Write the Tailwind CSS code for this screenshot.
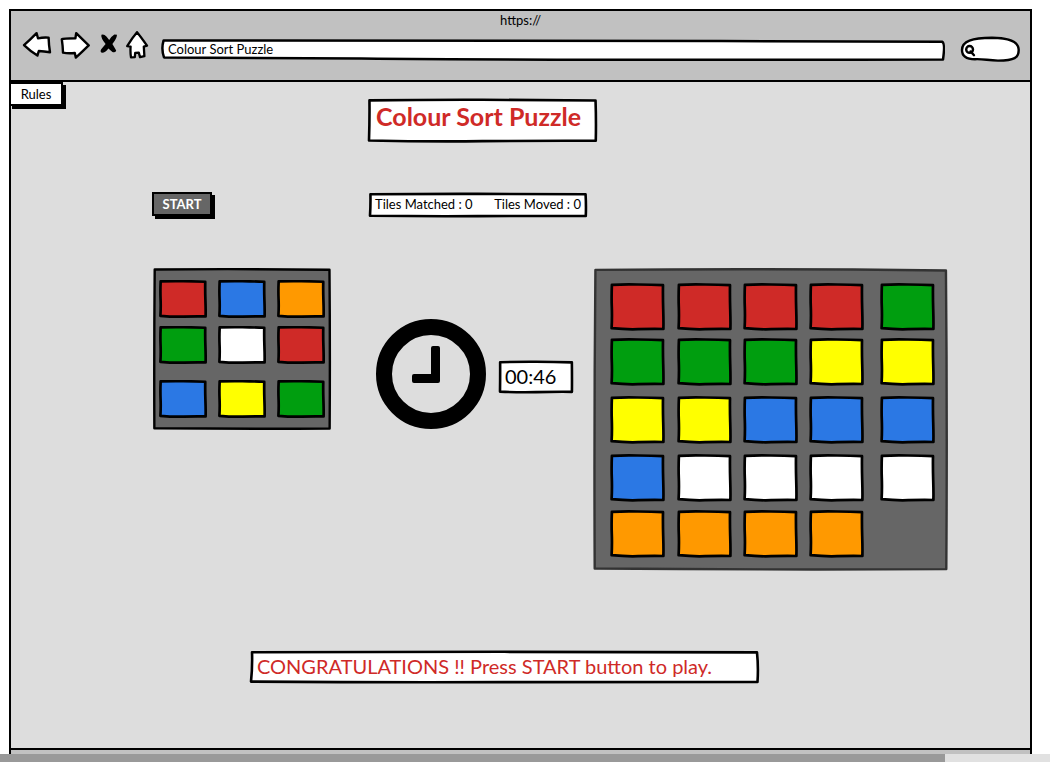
<!DOCTYPE html>
<html lang="en">
<head>
<meta charset="utf-8">
<meta name="viewport" content="width=device-width, initial-scale=1">
<title>Colour Sort Puzzle</title>
<script src="https://cdn.jsdelivr.net/npm/@tailwindcss/browser@4"></script>
</head>
<body class="bg-white font-['Lato','Liberation_Sans',sans-serif] text-[14px] leading-5 text-black">

<!-- Shared hand-drawn outlines -->
<svg class="hidden" aria-hidden="true">
  <symbol id="tile" viewBox="0 0 55 48" preserveAspectRatio="none">
    <path d="M1.9 1.8 Q14 1.2 28 1.5 T53 2.2 Q52.8 14 53.2 26 T53.4 46 Q40 45.8 28 46.2 T1.6 45.2 Q2.2 34 1.8 24 T1.9 1.8Z" fill="currentColor" stroke="#000" stroke-width="2.7" stroke-linejoin="round" vector-effect="non-scaling-stroke"/>
  </symbol>
  <symbol id="box" viewBox="0 0 100 100" preserveAspectRatio="none" overflow="visible">
    <path d="M0.2 1 Q25 -1 50 -0.6 T99.8 1.2 Q100.1 50 99.9 99.5 Q75 99 50 100.4 T0 98.6 Q0.3 50 0.2 1Z" fill="currentColor" stroke-width="2.6" stroke-linejoin="round" vector-effect="non-scaling-stroke"/>
  </symbol>
  <symbol id="panel" viewBox="0 0 100 100" preserveAspectRatio="none" overflow="visible">
    <path d="M0.4 0.3 Q50 -0.2 99.7 0.5 Q100.1 50 99.8 99.7 Q50 100 0.2 99.5 Q0 50 0.4 0.3Z" fill="currentColor" stroke-width="2.4" stroke-linejoin="round" vector-effect="non-scaling-stroke"/>
  </symbol>
</svg>

<div class="flex min-h-screen flex-col">
  <div class="mt-[9px] mr-[18px] ml-[9px] flex grow flex-col border-x-2 border-t-2 border-black bg-[#c1c1c1]">

    <header class="border-b-2 border-black pb-[18px]">
      <p class="pt-[1px] text-center text-[13px] leading-4">https://</p>
      <div class="flex items-center pr-[10px] pl-[11px]">
        <nav class="flex items-start" aria-label="Browser">
          <button class="mr-[8px]" aria-label="Back">
            <svg class="h-7 w-[30px]" viewBox="23 31 30 28" fill="#fff" stroke="#000" stroke-width="2.4" stroke-linejoin="round"><path d="M25 45.2Q31 40 37.6 33.2L39 38.3Q44 37.2 49.6 37.6Q49.8 45 51 52.2Q45 51.2 39.8 51L38.4 55.6Q31 51 25 45.2Z"/></svg>
          </button>
          <button class="mr-[8px]" aria-label="Forward">
            <svg class="h-7 w-[30px]" viewBox="60 31 30 28" fill="#fff" stroke="#000" stroke-width="2.4" stroke-linejoin="round"><path d="M61.8 39.2Q63 38.4 75.4 38.2L76.2 33.2Q82 39 88.7 45.4Q82 52 75.8 57.6L74.8 53Q68 53.8 63 52.6Q62.8 46 61.8 39.2Z"/></svg>
          </button>
          <button class="mr-[7px]" aria-label="Stop">
            <svg class="h-7 w-5" viewBox="99 31 20 28" fill="#000"><path d="M102.4 34.8Q105 33.8 107.4 36.4L110.2 40Q112.6 36 115.4 34.4L118 34.8Q117.8 38.6 113.4 44L117.2 50.4Q116.4 53 113.4 52L109.4 48.4Q106 52.8 103.4 52.8Q100.6 52.2 102.2 49.2L106.6 44Q101.6 38 102.4 34.8Z"/></svg>
          </button>
          <button class="mr-[12px]" aria-label="Home">
            <svg class="h-7 w-6" viewBox="126 31 24 28" fill="#fff" stroke="#000" stroke-width="2.3" stroke-linejoin="round"><path d="M138 32.2Q142 37 148 45.6L144.8 46.6L145.4 56.2L141 57.2L139.8 52.6L136.2 52.8L135.8 57.2L132 57.4Q131.2 52 131.6 46.6L128.2 46.2Q133 38 138 32.2Z"/></svg>
          </button>
        </nav>
        <div class="relative isolate mt-[9px] mr-[15px] grow">
          <svg class="absolute inset-0 -z-10 size-full text-white" viewBox="0 0 783 22" preserveAspectRatio="none" aria-hidden="true"><path d="M2.6 1.4Q390 .6 560 2L780 2.8Q783.4 4 781 20.6Q390 21.4 200 19.6L3 18.4Q0 10 2.6 1.4Z" fill="currentColor" stroke="#000" stroke-width="2.5" stroke-linejoin="round"/></svg>
          <input class="block h-[22px] w-full bg-transparent pb-[2px] pl-[7px] text-[13px] outline-none" type="text" value="Colour Sort Puzzle" aria-label="Address">
        </div>
        <div class="relative isolate mt-[8px] h-[26px] w-[60px]">
          <svg class="absolute inset-0 -z-10 size-full" viewBox="960 36 60 26" fill="#fff" stroke="#000" stroke-width="2.4" aria-hidden="true"><path d="M962 50C962 41 972 38 992 37.8C1006 38 1018 40 1018.6 49C1019.4 58 1014 60.5 998 60.6C988 60.6 984 58.8 975 59.2C967 59.2 962 56 962 50Z"/><circle cx="969.6" cy="49.4" r="3.4"/><path d="M970.6 51.4L974 55.2" stroke-linecap="round"/></svg>
          <input class="h-[24px] w-full bg-transparent pr-2 pl-[18px] outline-none" type="text" aria-label="Search">
        </div>
      </div>
    </header>

    <main class="flex grow flex-col border-b-2 border-black bg-[#ddd]">
      <div class="grid grid-cols-[1fr_auto_1fr] items-start">
        <button class="-ml-[2px] w-[54px] justify-self-start border-2 border-black bg-white text-[13px] leading-5 shadow-[3px_3px_0_#000]">Rules</button>
        <div class="relative isolate mt-[16px] mr-[76px] h-[45px] w-[231px] pl-[9px]">
          <svg class="absolute inset-[2px] -z-10 h-[41px] w-[227px] overflow-visible stroke-black text-white" aria-hidden="true"><use href="#box"/></svg>
          <h1 class="text-[25px] leading-9 font-bold text-[#cf2a27]">Colour Sort Puzzle</h1>
        </div>
      </div>

      <div class="mt-[49px] flex items-start pl-[141px]">
        <button class="w-[60px] border-2 border-black bg-[#666] text-[13px] leading-5 font-bold text-white shadow-[3px_3px_0_#000]">START</button>
        <div class="relative isolate ml-[156px] flex h-[26px] w-[220px] justify-between px-[7px] text-[13px] leading-6">
          <svg class="absolute inset-[2px] -z-10 h-[22px] w-[216px] overflow-visible stroke-black text-white" aria-hidden="true"><use href="#box"/></svg>
          <p>Tiles Matched : 0</p>
          <p>Tiles Moved : 0</p>
        </div>
      </div>

      <div class="mt-[50px] flex items-start pr-[82px] pl-[142px]">
        <section class="relative isolate h-[162px] w-[178px] pt-[12px] pl-[6px]" aria-label="Target pattern">
          <svg class="absolute inset-[1px] -z-10 h-[160px] w-[176px] overflow-visible stroke-black text-[#666]" aria-hidden="true"><use href="#panel"/></svg>
          <div id="target" class="grid grid-cols-[59px_59px_48px] grid-rows-[46px_54px_38px]"></div>
        </section>

        <div class="mt-[51px] ml-[45px] flex items-center gap-[12px]">
          <svg class="size-[110px]" viewBox="0 0 110 110" role="img" aria-label="Clock"><circle cx="55" cy="55" r="47" fill="none" stroke="#000" stroke-width="16"/><path d="M57 27H62Q64 27 64 29V62Q64 64 62 64H38Q36 64 36 62V57Q36 55 38 55H55V29Q55 27 57 27Z"/></svg>
          <div class="relative isolate mt-[5px] h-[34px] w-[76px] pl-[7px]">
            <svg class="absolute inset-[2px] -z-10 h-[30px] w-[72px] overflow-visible stroke-black text-white" aria-hidden="true"><use href="#box"/></svg>
            <p class="text-[20px] leading-8">00:46</p>
          </div>
        </div>

        <section class="relative isolate ml-auto h-[303px] w-[355px] pt-[15px] pl-[17px]" aria-label="Game board">
          <svg class="absolute inset-[1px] -z-10 h-[301px] w-[353px] overflow-visible stroke-[#333] text-[#666]" aria-hidden="true"><use href="#panel"/></svg>
          <div id="board" class="grid grid-cols-[67px_66px_66px_71px_55px] grid-rows-[55px_58px_58px_56px_48px]"></div>
        </section>
      </div>

      <div class="relative isolate mt-[79px] mb-[63px] ml-[238px] h-[34px] w-[511px] pl-[8px]">
        <svg class="absolute inset-[2px] -z-10 h-[30px] w-[507px] overflow-visible stroke-black text-white" aria-hidden="true"><use href="#box"/></svg>
        <p class="text-[20px] leading-8 text-[#cf2a27]">CONGRATULATIONS !! Press START button to play.</p>
      </div>
    </main>
    <div class="h-[4px]"></div>
  </div>
  <div class="h-[8px] bg-[#e1e1e1]"><div class="h-full w-[90%] bg-[#999]"></div></div>
</div>

<script>
  const colours = {
    R: ['text-[#cf2a27]', 'Red'],
    B: ['text-[#2b78e4]', 'Blue'],
    O: ['text-[#ff9900]', 'Orange'],
    G: ['text-[#009e0f]', 'Green'],
    W: ['text-[#ffffff]', 'White'],
    Y: ['text-[#ffff00]', 'Yellow']
  };
  function fill(id, tiles, size) {
    document.getElementById(id).innerHTML = [...tiles].map(t =>
      `<button class="${size}" aria-label="${colours[t][1]} tile"><svg class="block size-full ${colours[t][0]}"><use href="#tile"/></svg></button>`
    ).join('');
  }
  fill('target', 'RBOGWRBYG', 'h-[38px] w-[48px]');
  fill('board', 'RRRRGGGGYYYYBBBBWWWWOOOO', 'h-[48px] w-[55px]');
</script>
</body>
</html>
